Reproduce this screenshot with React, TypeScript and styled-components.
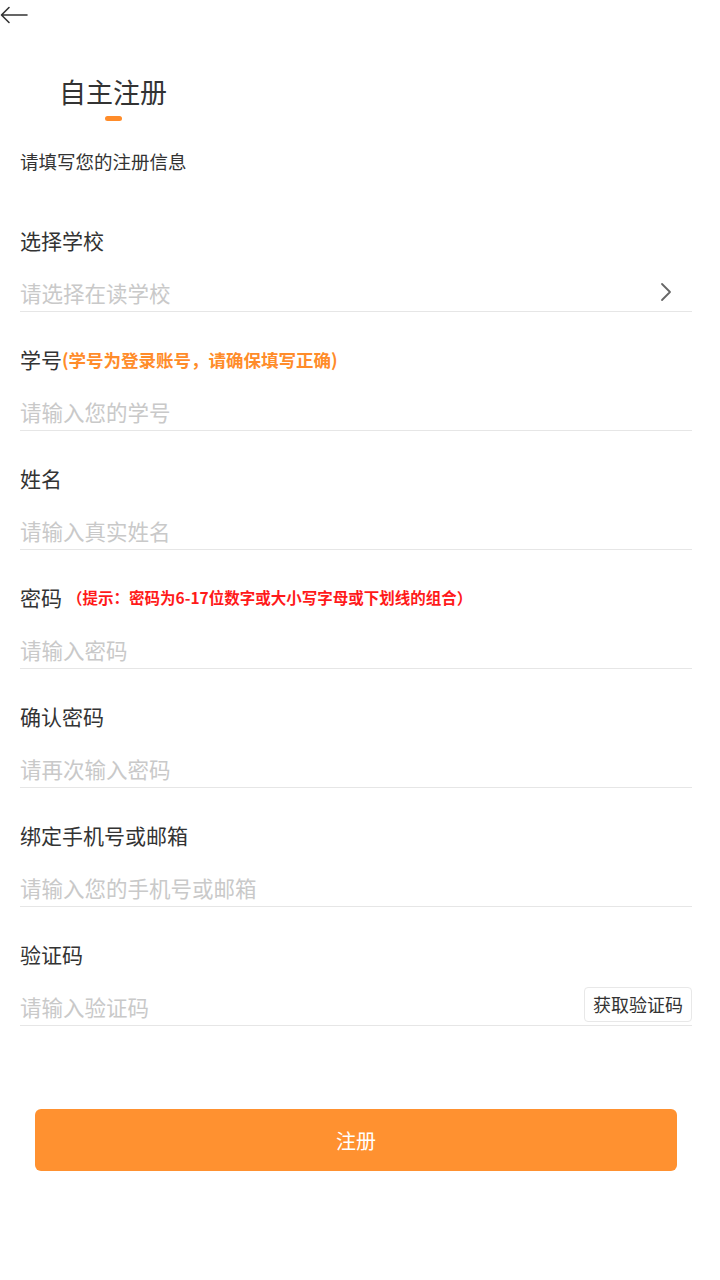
import React from "react";
import styled, { createGlobalStyle } from "styled-components";

const GlobalStyle = createGlobalStyle`
  html, body {
    margin: 0;
    padding: 0;
    background: #ffffff;
  }
  body {
    font-family: "Noto Sans CJK SC", "Noto Sans", sans-serif;
    color: #333333;
  }
`;

const Page = styled.div`
  width: 720px;
  min-height: 1280px;
  background: #fff;
  display: flex;
  flex-direction: column;
`;

const TopBar = styled.div`
  height: 30px;
  display: flex;
  align-items: center;
`;

const BackButton = styled.button`
  border: none;
  background: none;
  padding: 0;
  width: 30px;
  height: 30px;
  display: flex;
  align-items: center;
  cursor: pointer;
`;

const TitleBlock = styled.div`
  align-self: flex-start;
  margin: 42px 0 0 59px;
  display: flex;
  flex-direction: column;
  align-items: center;
`;

const Title = styled.h1`
  margin: 0;
  font-size: 27px;
  line-height: 40px;
  font-weight: 400;
  color: #333;
`;

const TitleMark = styled.span`
  margin-top: 4px;
  width: 17px;
  height: 5px;
  border-radius: 3px;
  background: #ff8c2a;
`;

const Subtitle = styled.p`
  margin: 28px 0 0 20px;
  font-size: 18.5px;
  line-height: 24px;
  color: #333;
`;

const Form = styled.div`
  margin-top: 52px;
  padding: 0 28px 0 20px;
  display: flex;
  flex-direction: column;
`;

const Field = styled.div`
  display: flex;
  flex-direction: column;
  margin-bottom: 32px;
  &:last-child {
    margin-bottom: 0;
  }
`;

const Label = styled.div`
  height: 30px;
  display: flex;
  align-items: center;
  font-size: 21px;
  color: #333;
`;

const Hint = styled.span<{ $tone: "orange" | "red" }>`
  font-size: ${(p) => (p.$tone === "red" ? "15.5px" : "17.5px")};
  font-weight: 700;
  color: ${(p) => (p.$tone === "red" ? "#ff1a1a" : "#ff8c2a")};
  margin-left: ${(p) => (p.$tone === "red" ? "5px" : "0")};
`;

const InputRow = styled.div`
  margin-top: 18px;
  height: 38px;
  display: flex;
  align-items: center;
  border-bottom: 1.5px solid #e6e6e6;
`;

const Input = styled.input`
  flex: 1;
  min-width: 0;
  border: none;
  outline: none;
  padding: 0;
  font-family: inherit;
  font-size: 21.5px;
  color: #333;
  background: transparent;
  &::placeholder {
    color: #c9c9c9;
  }
`;

const Chevron = styled.span`
  display: flex;
  margin-right: 20px;
`;

const CodeButton = styled.button`
  margin-bottom: 4px;
  height: 35px;
  padding: 0 8px;
  border: 1px solid #e8e8e8;
  border-radius: 4px;
  background: #fff;
  font-family: inherit;
  font-size: 18px;
  color: #333;
  cursor: pointer;
`;

const Submit = styled.button`
  margin: 83px 43px 0 35px;
  height: 62px;
  border: none;
  border-radius: 6px;
  background: #ff9130;
  color: #fff;
  font-family: inherit;
  font-size: 20px;
  cursor: pointer;
`;

type FieldDef = {
  label: string;
  placeholder: string;
  hint?: { text: string; tone: "orange" | "red" };
  type?: string;
  select?: boolean;
  code?: boolean;
};

const fields: FieldDef[] = [
  { label: "选择学校", placeholder: "请选择在读学校", select: true },
  {
    label: "学号",
    placeholder: "请输入您的学号",
    hint: { text: "(学号为登录账号，请确保填写正确)", tone: "orange" },
  },
  { label: "姓名", placeholder: "请输入真实姓名" },
  {
    label: "密码",
    placeholder: "请输入密码",
    type: "password",
    hint: { text: "（提示：密码为6-17位数字或大小写字母或下划线的组合）", tone: "red" },
  },
  { label: "确认密码", placeholder: "请再次输入密码", type: "password" },
  { label: "绑定手机号或邮箱", placeholder: "请输入您的手机号或邮箱" },
  { label: "验证码", placeholder: "请输入验证码", code: true },
];

export default function App() {
  return (
    <Page>
      <GlobalStyle />
      <TopBar>
        <BackButton aria-label="返回">
          <svg width="28" height="18" viewBox="0 0 28 18" fill="none">
            <path d="M27 9H2M9 1.5L1.5 9L9 16.5" stroke="#333" strokeWidth="1.6" strokeLinecap="round" strokeLinejoin="round" />
          </svg>
        </BackButton>
      </TopBar>

      <TitleBlock>
        <Title>自主注册</Title>
        <TitleMark />
      </TitleBlock>

      <Subtitle>请填写您的注册信息</Subtitle>

      <Form>
        {fields.map((f) => (
          <Field key={f.label}>
            <Label>
              {f.label}
              {f.hint && <Hint $tone={f.hint.tone}>{f.hint.text}</Hint>}
            </Label>
            <InputRow>
              <Input type={f.type || "text"} placeholder={f.placeholder} readOnly={f.select} />
              {f.select && (
                <Chevron>
                  <svg width="12" height="20" viewBox="0 0 12 20" fill="none">
                    <path d="M2 2L10 10L2 18" stroke="#666" strokeWidth="1.8" strokeLinecap="round" strokeLinejoin="round" />
                  </svg>
                </Chevron>
              )}
              {f.code && <CodeButton>获取验证码</CodeButton>}
            </InputRow>
          </Field>
        ))}
      </Form>

      <Submit>注册</Submit>
    </Page>
  );
}
